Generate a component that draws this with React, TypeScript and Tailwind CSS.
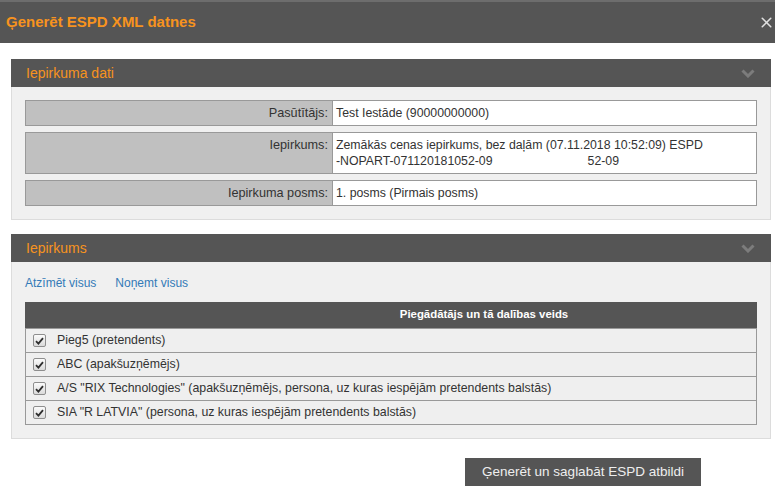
import { X } from 'lucide-react';

const font = { fontFamily: '"Liberation Sans", Arial, sans-serif' };

const Chevron = () => (
  <svg width="14" height="9" viewBox="0 0 14 9" className="shrink-0">
    <polyline points="1.5,1.5 7,7 12.5,1.5" fill="none" stroke="#7c7c7c" strokeWidth="3" />
  </svg>
);

const Check = () => (
  <span className="flex h-[13px] w-[13px] shrink-0 items-center justify-center rounded-[2px] border border-[#8e8e8e] bg-gradient-to-b from-[#fbfbfb] to-[#dadada]">
    <svg width="9" height="8" viewBox="0 0 9 8">
      <polyline points="1,4.2 3.4,6.6 8,1.2" fill="none" stroke="#2e2e2e" strokeWidth="1.8" />
    </svg>
  </span>
);

const PanelHeader = ({ title }: { title: string }) => (
  <div className="flex h-[28px] items-center justify-between bg-[#555555] pl-[15px] pr-[16px]">
    <span className="text-[14px] text-[#f7931e]">{title}</span>
    <Chevron />
  </div>
);

const InfoRow = ({ label, children }: { label: string; children: React.ReactNode }) => (
  <div className="flex border border-[#999999] bg-[#c0c0c0] leading-[16px] text-[#333333]">
    <div className="w-[306px] shrink-0 py-[4px] pr-[4px] text-right text-[12.7px]">{label}</div>
    <div className="flex-1 border-l border-[#999999] bg-white py-[4px] pl-[3px] text-[12.3px]">{children}</div>
  </div>
);

export default function App() {
  const suppliers = [
    'Pieg5 (pretendents)',
    'ABC (apakšuzņēmējs)',
    'A/S "RIX Technologies" (apakšuzņēmējs, persona, uz kuras iespējām pretendents balstās)',
    'SIA "R LATVIA" (persona, uz kuras iespējām pretendents balstās)',
  ];

  return (
    <div className="h-[494px] w-[775px] overflow-hidden bg-white" style={font}>
      {/* Dialog title bar */}
      <div className="flex h-[43px] items-center justify-between border-t-2 border-[#6d6d6d] bg-[#555555] pl-[6px] pr-0">
        <span className="text-[15px] font-bold text-[#f7931e]">Ģenerēt ESPD XML datnes</span>
        <X size={17} strokeWidth={2.2} color="#e0e0e0" />
      </div>

      <div className="px-[11px] pt-[16px] pr-[4px]">
        {/* Iepirkuma dati */}
        <div>
          <PanelHeader title="Iepirkuma dati" />
          <div className="flex flex-col gap-[6px] border-x border-b border-[#dcdcdc] bg-[#f0f0f0] px-[13px] pt-[13px] pb-[13px]">
            <InfoRow label="Pasūtītājs:">Test Iestāde (90000000000)</InfoRow>
            <InfoRow label="Iepirkums:">
              Zemākās cenas iepirkums, bez daļām (07.11.2018 10:52:09) ESPD
              <br />
              -NOPART-071120181052-09
              <span className="ml-[95px]">52-09</span>
            </InfoRow>
            <InfoRow label="Iepirkuma posms:">1. posms (Pirmais posms)</InfoRow>
          </div>
        </div>

        {/* Iepirkums */}
        <div className="mt-[14px]">
          <PanelHeader title="Iepirkums" />
          <div className="border-x border-b border-[#dcdcdc] bg-[#f0f0f0] px-[13px] pt-[13px] pb-[13px]">
            <div className="flex gap-[19px] text-[12px] leading-[16px] text-[#337ab7]">
              <span>Atzīmēt visus</span>
              <span>Noņemt visus</span>
            </div>
            <div className="mt-[11px]">
              <div className="flex h-[27px] items-center justify-center border-b border-[#999999] bg-[#555555] pl-[186px] text-[11.4px] font-bold text-white">
                Piegādātājs un tā dalības veids
              </div>
              {suppliers.map((s, i) => (
                <div
                  key={i}
                  className="flex h-[24px] items-center gap-[11px] border-x border-b border-[#999999] bg-[#efefef] pl-[7px] text-[12.35px] text-[#333333]"
                >
                  <Check />
                  <span>{s}</span>
                </div>
              ))}
            </div>
          </div>
        </div>

        {/* Action */}
        <div className="mt-[19px] pl-[454px]">
          <button className="h-[28px] w-[236px] bg-[#555555] text-[13.5px] text-[#eeeeee]">
            Ģenerēt un saglabāt ESPD atbildi
          </button>
        </div>
      </div>
    </div>
  );
}
